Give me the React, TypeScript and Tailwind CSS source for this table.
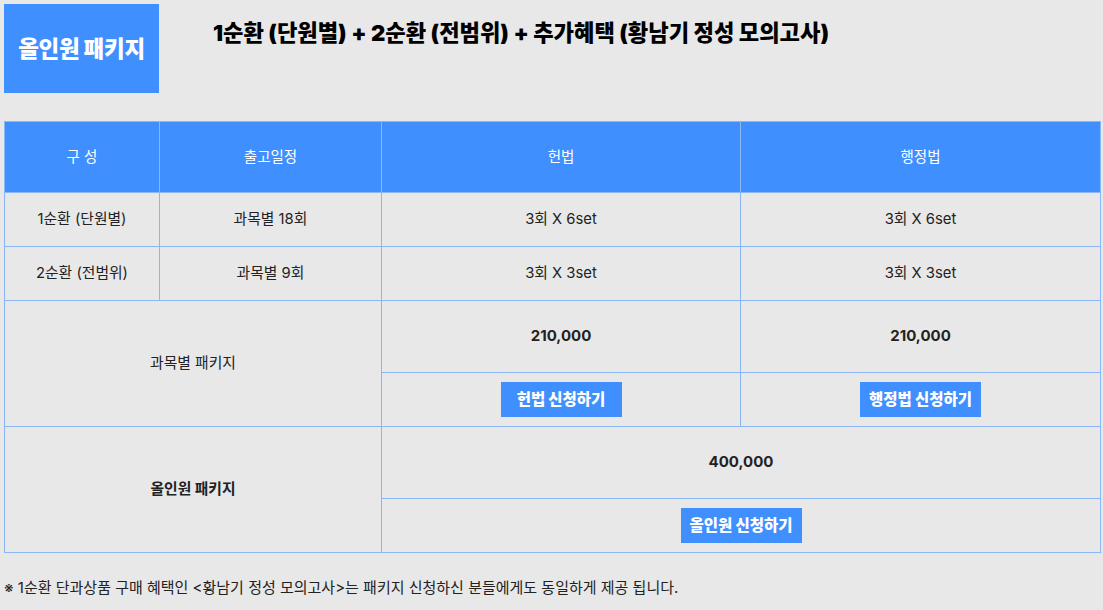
import React from 'react'

const font = { fontFamily: 'Inter, "Noto Sans CJK KR", "Noto Sans", sans-serif' }

function ApplyButton({ label }: { label: string }) {
  return (
    <button className="bg-[#3f8fff] text-white font-black text-[15.5px] h-[35px] w-[121px] leading-none">
      {label}
    </button>
  )
}

export default function App() {
  const cell = 'border border-[#8ab6f5] text-center align-middle'
  return (
    <div className="w-[1103px] h-[610px] bg-[#e8e8e8] text-[#222] overflow-hidden" style={font}>
      <div className="flex items-start pt-[4px] pl-[4px]">
        <div className="w-[155px] h-[89px] bg-[#3f8fff] text-white font-black text-[22.5px] flex items-center justify-center tracking-[-0.3px]">
          올인원 패키지
        </div>
        <h1 className="ml-[54px] mt-[14px] font-black text-[22.2px] text-black leading-[30px]">
          1순환 (단원별) + 2순환 (전범위) + 추가혜택 (황남기 정성 모의고사)
        </h1>
      </div>

      <table className="ml-[4px] mt-[28px] w-[1096px] border-collapse text-[14.8px] table-fixed">
        <colgroup>
          <col className="w-[155px]" />
          <col className="w-[222px]" />
          <col className="w-[359px]" />
          <col className="w-[360px]" />
        </colgroup>
        <thead>
          <tr className="h-[71px] bg-[#3f8fff] text-white text-[14.5px]">
            <th className={`${cell} font-normal`}>구 성</th>
            <th className={`${cell} font-normal`}>출고일정</th>
            <th className={`${cell} font-normal`}>헌법</th>
            <th className={`${cell} font-normal`}>행정법</th>
          </tr>
        </thead>
        <tbody>
          <tr className="h-[54px]">
            <td className={cell}>1순환 (단원별)</td>
            <td className={cell}>과목별 18회</td>
            <td className={cell}>3회 X 6set</td>
            <td className={cell}>3회 X 6set</td>
          </tr>
          <tr className="h-[54px]">
            <td className={cell}>2순환 (전범위)</td>
            <td className={cell}>과목별 9회</td>
            <td className={cell}>3회 X 3set</td>
            <td className={cell}>3회 X 3set</td>
          </tr>
          <tr className="h-[72px]">
            <td className={cell} colSpan={2} rowSpan={2}>과목별 패키지</td>
            <td className={`${cell} font-bold text-[15px]`}>210,000</td>
            <td className={`${cell} font-bold text-[15px]`}>210,000</td>
          </tr>
          <tr className="h-[54px]">
            <td className={cell}><ApplyButton label="헌법 신청하기" /></td>
            <td className={cell}><ApplyButton label="행정법 신청하기" /></td>
          </tr>
          <tr className="h-[72px]">
            <td className={`${cell} font-bold`} colSpan={2} rowSpan={2}>올인원 패키지</td>
            <td className={`${cell} font-bold text-[15px]`} colSpan={2}>400,000</td>
          </tr>
          <tr className="h-[54px]">
            <td className={cell} colSpan={2}><ApplyButton label="올인원 신청하기" /></td>
          </tr>
        </tbody>
      </table>

      <p className="ml-[4px] mt-[24px] text-[15px] text-[#222]">
        ※ 1순환 단과상품 구매 혜택인 &lt;황남기 정성 모의고사&gt;는 패키지 신청하신 분들에게도 동일하게 제공 됩니다.
      </p>
    </div>
  )
}
